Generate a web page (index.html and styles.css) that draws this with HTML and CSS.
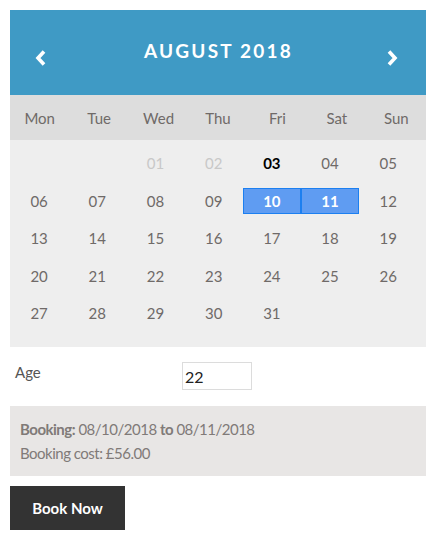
FILE: index.html
```html
<!DOCTYPE html>
<html lang="en">
  <head>
    <meta charset="UTF-8" />
    <meta name="viewport" content="width=device-width, initial-scale=1.0" />
    <title>Booking</title>
    <link rel="stylesheet" href="styles.css">
  </head>
  <body>
    <div class="calendar">
      <div class="cal-head">
        <svg class="nav" width="12" height="16" viewBox="0 0 12 16"><polyline points="9,1.5 3,8 9,14.5" /></svg>
        <span class="month">AUGUST 2018</span>
        <svg class="nav" width="12" height="16" viewBox="0 0 12 16"><polyline points="3,1.5 9,8 3,14.5" /></svg>
      </div>
      <div class="weekdays">
        <span>Mon</span><span>Tue</span><span>Wed</span><span>Thu</span><span>Fri</span><span>Sat</span><span>Sun</span>
      </div>
      <div class="days">
        <span></span><span></span>
        <span class="past">01</span><span class="past">02</span>
        <span class="today">03</span><span>04</span><span>05</span>
        <span>06</span><span>07</span><span>08</span><span>09</span>
        <span class="sel">10</span><span class="sel">11</span><span>12</span>
        <span>13</span><span>14</span><span>15</span><span>16</span><span>17</span><span>18</span><span>19</span>
        <span>20</span><span>21</span><span>22</span><span>23</span><span>24</span><span>25</span><span>26</span>
        <span>27</span><span>28</span><span>29</span><span>30</span><span>31</span>
      </div>
    </div>

    <div class="field">
      <label for="age">Age</label>
      <input type="text" id="age" value="22" />
    </div>

    <div class="summary">
      <p><b>Booking:</b> 08/10/2018 <b>to</b> 08/11/2018</p>
      <p>Booking cost: &pound;56.00</p>
    </div>

    <button class="book-btn">Book Now</button>
  </body>
</html>
```

FILE: styles.css
```css
body {
  font-family: Lato, "Open Sans", sans-serif;
  margin: 10px;
  width: 416px;
  color: #666;
}
.cal-head {
  background: #3f9ac5;
  color: white;
  height: 85px;
  display: flex;
  justify-content: space-between;
  padding: 0 28px 0 25px;
  box-sizing: border-box;
}
.month {
  font-weight: bold;
  font-size: 19px;
  letter-spacing: 2.2px;
  margin: 29px 0 0 4px;
}
.nav {
  margin-top: 40px;
  fill: none;
  stroke: white;
  stroke-width: 3.6;
}
.weekdays {
  background: #dddddd;
  height: 45px;
  display: grid;
  grid-template-columns: repeat(7, 1fr);
  align-items: center;
  text-align: center;
  font-size: 15px;
  color: #6f6a68;
}
.days {
  background: #eeeeee;
  display: grid;
  grid-template-columns: repeat(7, 58.2px);
  row-gap: 11.5px;
  padding: 10px 8px 21px 0;
  text-align: center;
  font-size: 15px;
  color: #6f6a68;
}
.days span {
  height: 26px;
  line-height: 26px;
  box-sizing: border-box;
}
.days .past {
  color: #c8c8c8;
}
.days .today {
  color: #000;
  font-weight: bold;
}
.days .sel {
  background: #5f9cf2;
  border: 1px solid #1c7ff0;
  line-height: 24px;
  color: white;
  font-weight: bold;
}
.field {
  display: flex;
  align-items: flex-start;
  padding: 15px 0 16px 5px;
}
.field label {
  width: 167px;
  font-size: 15px;
  color: #555;
  padding-top: 1px;
}
.field input {
  width: 70px;
  height: 28px;
  box-sizing: border-box;
  border: 1px solid #dcdcdc;
  padding: 2px;
  font-family: inherit;
  font-size: 16px;
  color: #222;
}
.summary {
  background: #e8e6e5;
  padding: 11px 10px;
  font-size: 15px;
  letter-spacing: -0.5px;
  color: #807a78;
}
.summary p {
  margin: 0;
  line-height: 24px;
}
.book-btn {
  margin-top: 10px;
  background: #333;
  color: white;
  border: none;
  width: 115px;
  height: 44px;
  font-family: inherit;
  font-weight: bold;
  font-size: 15px;
}
```
